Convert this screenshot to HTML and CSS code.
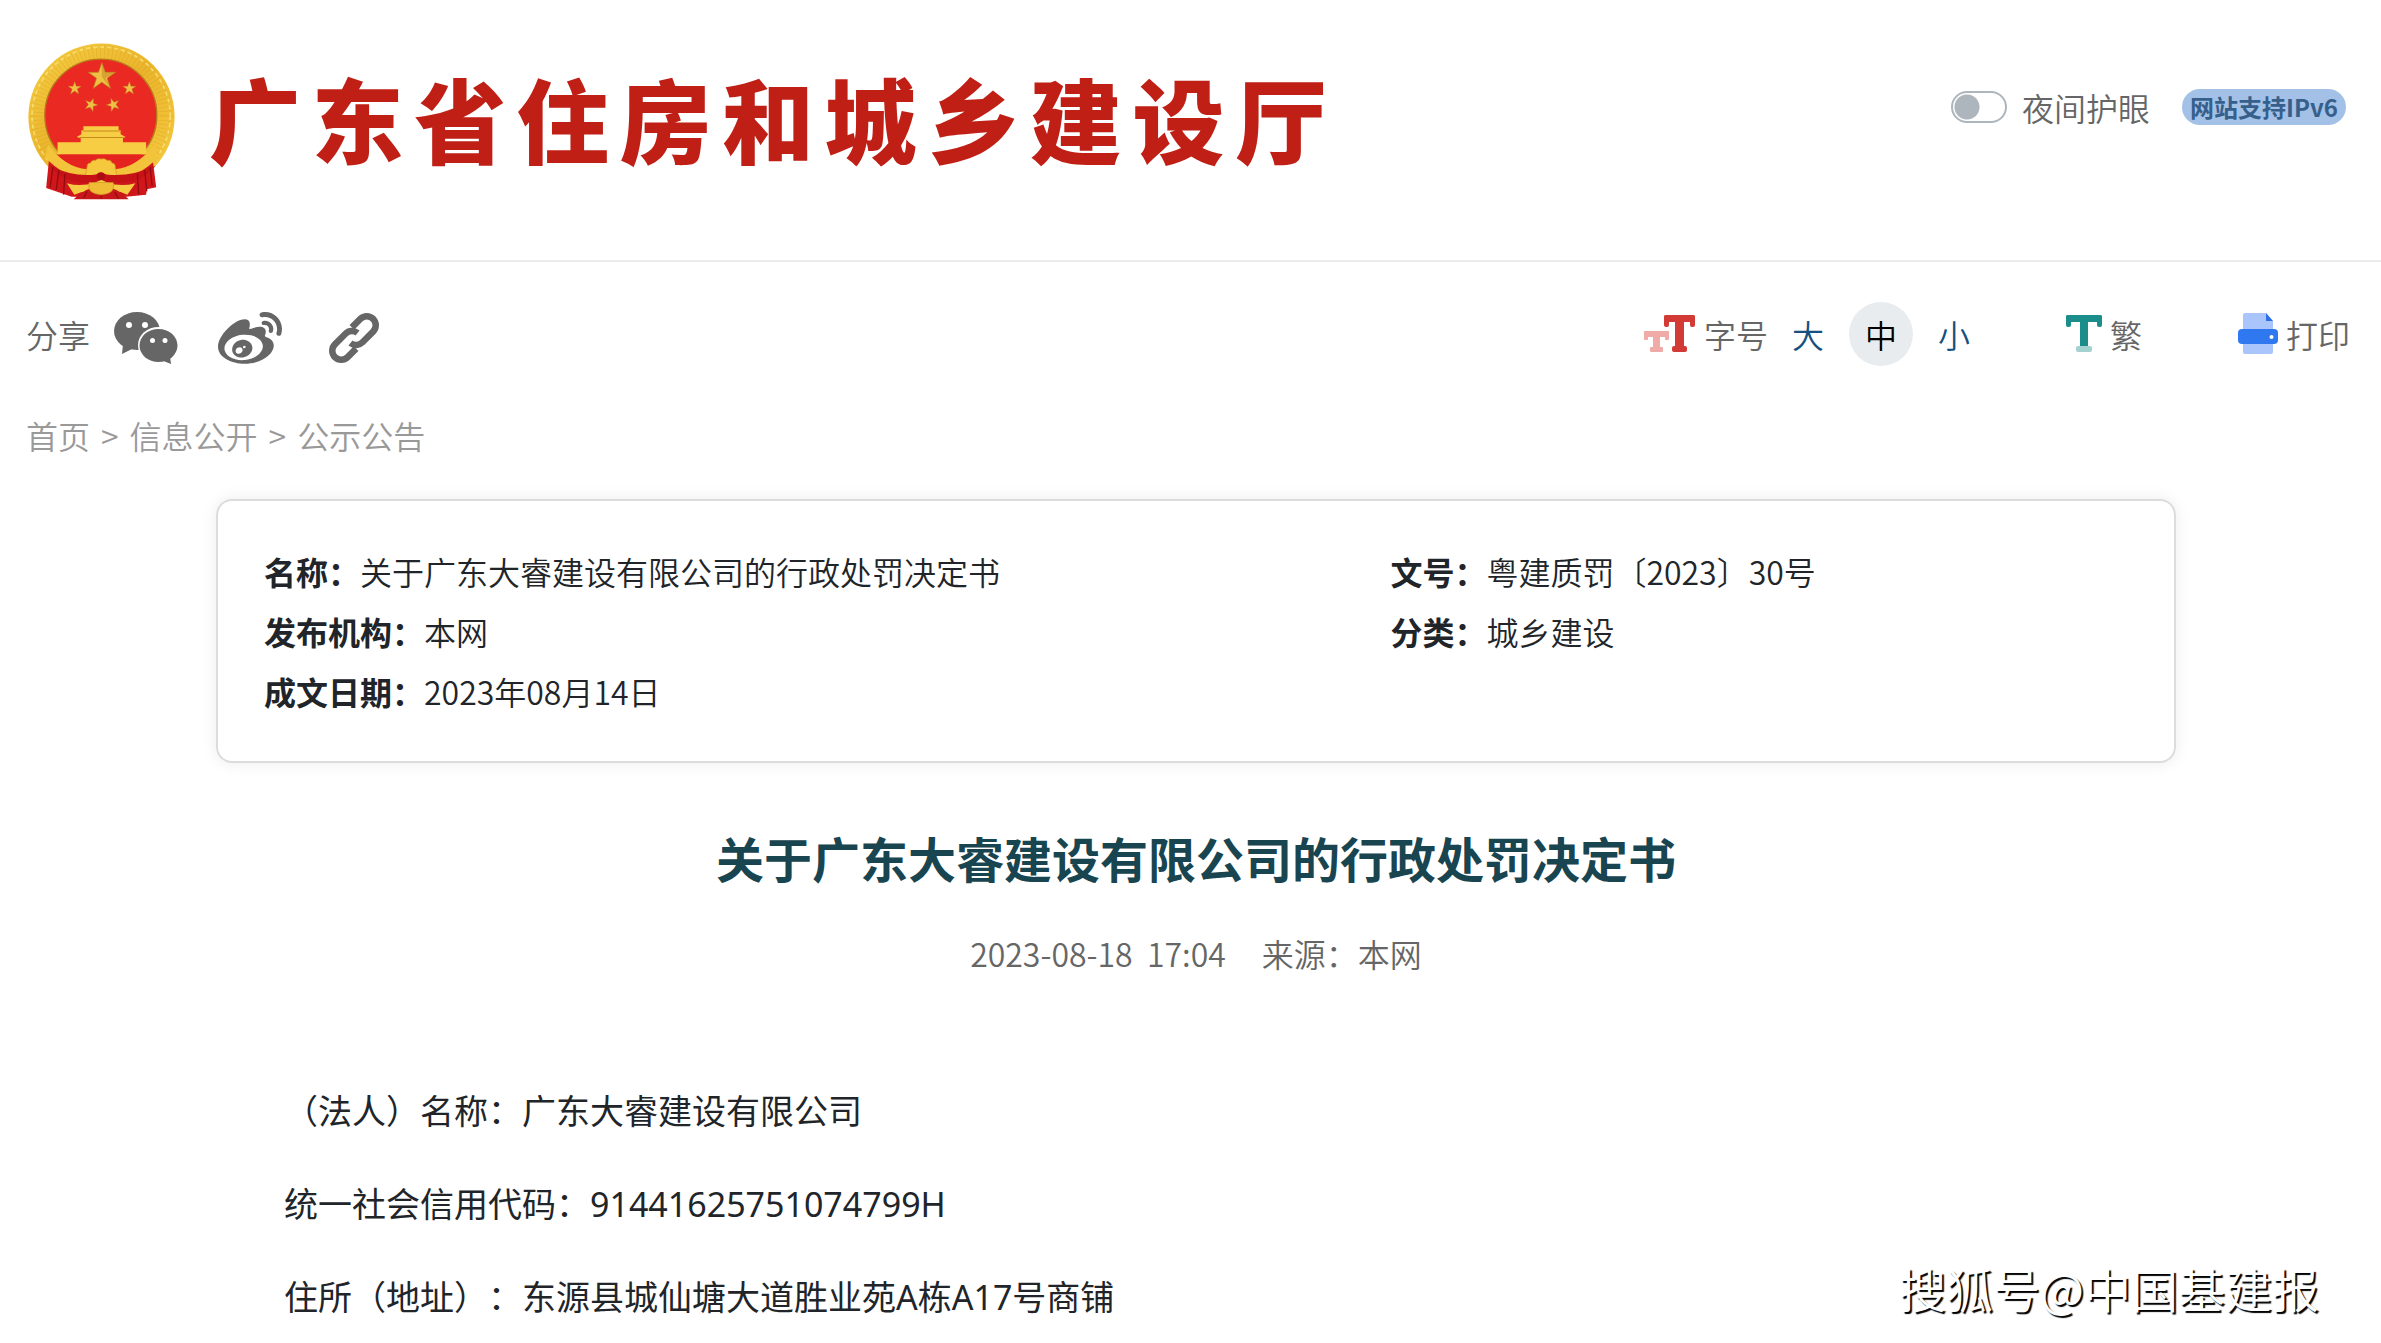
FILE: index.html
```html
<!DOCTYPE html>
<html lang="zh-CN">
<head>
<meta charset="utf-8">
<title>关于广东大睿建设有限公司的行政处罚决定书</title>
<link rel="stylesheet" href="styles.css">
</head>
<body>
<header class="site-header">
  <svg class="emblem" viewBox="86 70 438 468" aria-hidden="true">
    <defs>
      <linearGradient id="gold" x1="0" y1="0" x2="1" y2="1">
        <stop offset="0" stop-color="#f6cf45"/><stop offset=".5" stop-color="#eab52c"/><stop offset="1" stop-color="#f5ca40"/>
      </linearGradient>
      <path id="star" d="M0-42 10-13 41-13 16 5 26 36 0 17-26 36-16 5-41-13-10-13Z"/>
    </defs>
    <path d="M150 443A218 218 0 1 1 460 443Z" fill="url(#gold)"/>
    <circle cx="304" cy="288" r="192" fill="none" stroke="#d69a1e" stroke-width="40" stroke-dasharray="3 9" opacity=".3"/>
    <circle cx="304" cy="288" r="206" fill="none" stroke="#fbe27a" stroke-width="5" stroke-dasharray="12 9" opacity=".8"/>
    <circle cx="303" cy="285" r="167" fill="#ea2a22" stroke="#b67a1b" stroke-width="4"/>
    <g fill="#efc043" stroke="#b5741d" stroke-width="2">
      <use href="#star" x="306" y="170"/>
      <use href="#star" transform="translate(225 205) scale(.48)"/>
      <use href="#star" transform="translate(388 205) scale(.48)"/>
      <use href="#star" transform="translate(274 254) scale(.48) rotate(20)"/>
      <use href="#star" transform="translate(340 254) scale(.48) rotate(-20)"/>
    </g>
    <path d="M306 128v42l26 36-15-32 31-17-31 1Z" fill="#c98c28" opacity=".6"/>
    <path d="M251 318h105v12h6v12l15 8-8 4v12h69v36H174v-36h69v-12l-12-4 14-8v-12h6Z" fill="#f7cd43"/>
    <path d="M240 352h132M249 332h110" stroke="#c98a20" stroke-width="3" fill="none"/>
    <path d="M150 402q24 36 70 34l84 30 84-30q46 2 68-32l12 96-28 6-2 16-60 6H216l-30-10-46-16Z" fill="#cf171b"/>
    <path d="M162 402h276l-56 44H222Z" fill="#e6241f"/>
    <path d="M146 372q50 70 116 74v30q-70-6-126-66ZM464 372q-54 70-120 74v30q76-6 130-66Z" fill="#f2c33b"/>
    <path d="M262 440q0-12 10-12 4-10 14-8 8-8 18-4 10-4 18 4 12-2 14 8 10 0 10 12l6 30H256Z" fill="#f5c83e" stroke="#d59a21" stroke-width="2"/>
    <path d="M150 436q70 34 138 26l16-6 16 6q72 8 146-26-44 58-144 52l-18-6-18 6q-90 6-136-52Z" fill="#c51217"/>
    <path d="M202 488q40 12 84-2l18-8 18 8q40 14 84 2l-24 34q-40-20-78 0-40-18-80 0Z" fill="#f6ca43"/>
    <path d="M222 536q40-42 82-34 44-8 82 34Z" fill="#c8171a"/>
    <path d="M268 486h72q8 34-36 36-44-2-36-36Z" fill="#f1bc35" stroke="#cf941f" stroke-width="2"/>
    <circle cx="303" cy="467" r="12" fill="#ad0d12"/>
    <path d="M160 440l-8 60M178 450l-8 58M196 460l-4 62M450 440l6 56M434 450l6 62M412 460l4 62M262 512l-10 20M304 526v8M344 514l12 20" stroke="#950b10" stroke-width="4" fill="none"/>
  </svg>
  <h1 class="site-name">广东省住房和城乡建设厅</h1>
  <div class="header-tools">
    <label class="night"><input class="night-switch" type="checkbox">夜间护眼</label>
    <span class="ipv6">网站支持IPv6</span>
  </div>
</header>

<div class="toolbar">
  <div class="share">
    <span>分享</span>
    <button class="icon-button" type="button" aria-label="微信">
      <svg width="64" height="52" viewBox="0 0 64 52">
        <g fill="#666"><ellipse cx="23" cy="19" rx="23" ry="19"/><path d="M9 32 8 42 20 36Z"/></g>
        <ellipse cx="44.500" cy="33" rx="20.500" ry="18" fill="#fff"/>
        <g fill="#666"><ellipse cx="44.500" cy="33.500" rx="19" ry="16.500"/><path d="M47 48 57 52 56 44Z"/></g>
        <g fill="#fff"><circle cx="15" cy="13" r="3"/><circle cx="31" cy="13" r="3"/><circle cx="38.500" cy="28.500" r="2.500"/><circle cx="51" cy="28.500" r="2.500"/></g>
      </svg>
    </button>
    <button class="icon-button" type="button" aria-label="微博">
      <svg width="64" height="52" viewBox="0 32 512 416" fill="#666"><path d="M407 177.600c7.600-24-13.400-46.800-37.400-41.700-22 4.800-28.800-28.100-7.100-32.800 50.100-10.900 92.300 37.100 76.500 84.800-6.800 21.200-38.800 10.800-32-10.300zM214.800 446.700C108.500 446.700 0 395.300 0 310.400c0-44.300 28-95.400 76.300-143.700C176 67 279.500 65.800 249.900 161c-4 13.100 12.300 5.700 12.300 6 79.500-33.600 140.500-16.800 114 51.400-3.700 9.400 1.100 10.900 8.300 13.100 135.700 42.300 34.800 215.200-169.700 215.200zm143.700-146.300c-5.400-55.700-78.500-94-163.400-85.700-84.800 8.600-148.800 60.300-143.400 116s78.500 94 163.400 85.700c84.800-8.600 148.800-60.300 143.400-116zM347.900 35.100c-25.900 5.600-16.800 43.700 8.300 38.300 72.300-15.200 134.800 52.800 111.700 124-7.400 24.200 29.100 37 37.400 12 31.900-99.800-55.100-195.900-157.400-174.300zm-78.500 311c-17.100 38.800-66.800 60-109.100 46.300-40.800-13.100-58-53.400-40.300-89.700 17.700-35.400 63.100-55.400 103.400-45.100 42 10.800 63.100 50.200 46 88.500zm-86.300-30c-12.900-5.400-30 .3-38 12.900-8.300 12.900-4.300 28 8.600 34 13.100 6 30.800.3 39.100-12.900 8-13.100 3.700-28.300-9.700-34zm32.600-13.400c-5.100-1.700-11.400.6-14.300 5.400-2.900 5.100-1.400 10.600 3.700 12.900 5.100 2 11.700-.3 14.600-5.400 2.800-5.200 1.100-10.900-4-12.900z"/></svg>
    </button>
    <button class="icon-button" type="button" aria-label="复制链接">
      <svg width="64" height="52" viewBox="-7 -1 64 52"><g transform="rotate(-45 25 25)" fill="none" stroke="#666" stroke-width="6.500"><path d="M31 16H43a9 9 0 0 1 0 18H28a9 9 0 0 1-9-8"/><path d="M19 34H7a9 9 0 0 1 0-18H22a9 9 0 0 1 9 8"/></g></svg>
    </button>
  </div>
  <div class="page-tools">
    <div class="tool">
      <svg width="52" height="38" viewBox="0 0 52 38" aria-hidden="true">
        <g fill="#f0aaa8"><rect y="16" width="25" height="6" rx="1"/><rect y="16" width="4" height="9" rx="1"/><rect x="21" y="16" width="4" height="9" rx="1"/><rect x="9" y="18" width="7" height="17"/><rect x="6" y="32" width="13" height="5" rx="1"/></g>
        <g fill="#d23a35"><rect x="20" width="31" height="7" rx="2"/><rect x="20" width="5" height="12" rx="2"/><rect x="46" width="5" height="12" rx="2"/><rect x="31" y="4" width="9" height="30"/><rect x="28" y="31" width="15" height="6" rx="2"/></g>
      </svg>
      <span>字号</span>
      <div class="sizes">
        <button class="size" type="button">大</button>
        <button class="size size-current" type="button">中</button>
        <button class="size" type="button">小</button>
      </div>
    </div>
    <button class="tool" type="button">
      <svg width="36" height="38" viewBox="0 0 36 38" aria-hidden="true"><g fill="#1b8e8b"><rect width="36" height="7" rx="2"/><rect width="5" height="12" rx="2"/><rect x="31" width="5" height="12" rx="2"/><rect x="14" y="4" width="8" height="27"/></g><rect x="10" y="31" width="16" height="6" rx="2" fill="#a4d2d0"/></svg>
      繁
    </button>
    <button class="tool print" type="button">
      <svg width="40" height="42" viewBox="0 0 40 42" aria-hidden="true"><path d="M5 2q0-2 2-2h21l7 8v11H5Z" fill="#a9c5fb"/><path d="m28 0 7 8h-7Z" fill="#2e6fe8"/><rect y="16" width="40" height="15" rx="4" fill="#2f78f0"/><path d="M5 31h30v8q0 2-2 2H7q-2 0-2-2Z" fill="#a9c5fb"/><circle cx="33.500" cy="24" r="2" fill="#fff"/></svg>
      打印
    </button>
  </div>
</div>

<nav class="crumbs" aria-label="面包屑">
  <a href="#home">首页</a><span>&gt;</span><a href="#info">信息公开</a><span>&gt;</span><a href="#notice">公示公告</a>
</nav>

<main class="article">
  <dl class="summary">
    <div class="item"><dt>名称：</dt><dd>关于广东大睿建设有限公司的行政处罚决定书</dd></div>
    <div class="item"><dt>文号：</dt><dd>粤建质罚〔2023〕30号</dd></div>
    <div class="item"><dt>发布机构：</dt><dd>本网</dd></div>
    <div class="item"><dt>分类：</dt><dd>城乡建设</dd></div>
    <div class="item"><dt>成文日期：</dt><dd>2023年08月14日</dd></div>
  </dl>
  <h2 class="title">关于广东大睿建设有限公司的行政处罚决定书</h2>
  <div class="meta"><time>2023-08-18&nbsp; 17:04</time><span>来源：本网</span></div>
  <div class="content">
    <p>（法人）名称：广东大睿建设有限公司</p>
    <p>统一社会信用代码：91441625751074799H</p>
    <p>住所（地址）：东源县城仙塘大道胜业苑A栋A17号商铺</p>
  </div>
</main>
<div class="watermark">搜狐号@中国基建报</div>
</body>
</html>
```

FILE: styles.css
```css
* {
  box-sizing: border-box;
}

body {
  position: relative;
  margin: 0;
  background: #fff;
  color: #212529;
  font-family: "Noto Sans CJK SC", sans-serif;
  font-size: 32px;
  font-weight: 350;
  line-height: 48px;
  text-spacing-trim: space-all;
}

button {
  padding: 0;
  border: 0;
  background: none;
  color: inherit;
  font: inherit;
  cursor: pointer;
}

svg {
  display: block;
  flex: none;
}

.site-header {
  display: flex;
  align-items: flex-start;
  height: 262px;
  padding: 43px 35px 0 28px;
  border-bottom: 2px solid #ebebeb;
}

.emblem {
  width: 147px;
  height: 157px;
}

.site-name {
  width: 1118px;
  margin: 14px 0 0 34px;
  color: #c01f16;
  font-size: 92px;
  font-weight: 900;
  line-height: 120px;
  text-align-last: justify;
}

.header-tools {
  display: flex;
  align-items: center;
  gap: 32px;
  margin: 40px 0 0 auto;
  color: #666;
}

.night {
  display: flex;
  align-items: center;
  gap: 15px;
}

.night-switch {
  width: 56px;
  height: 32px;
  margin: 0;
  border: 2px solid #adb5bd;
  border-radius: 16px;
  appearance: none;
  background: radial-gradient(circle at 14px 14px, #adb5bd 12px, transparent 13px);
}

.ipv6 {
  padding: 0 8px;
  border-radius: 18px;
  background: #a3c1e6;
  color: #365f8c;
  font-size: 24px;
  font-weight: 700;
  line-height: 36px;
}

.toolbar {
  display: flex;
  align-items: center;
  justify-content: space-between;
  padding: 40px 31px 0 26px;
  color: #666;
}

.share {
  display: flex;
  align-items: center;
  gap: 40px;
}

.share span {
  margin-right: -16px;
}

.icon-button {
  margin-top: 8px;
}

.page-tools {
  display: flex;
  align-items: center;
}

.tool {
  display: flex;
  align-items: center;
  gap: 8px;
  margin-right: 80px;
}

.print {
  margin: 0 0 0 16px;
}

.sizes {
  display: flex;
  gap: 9px;
}

.size {
  width: 64px;
  height: 64px;
  border-radius: 32px;
  color: #16507f;
}

.size-current {
  background: #e9ecef;
  color: #000;
}

.crumbs {
  display: flex;
  gap: 11px;
  padding: 45px 26px 40px;
  color: #999;
}

.crumbs a {
  color: inherit;
  text-decoration: none;
}

.article {
  padding: 0 205px 0 216px;
}

.summary {
  display: grid;
  grid-template-columns: 3fr 2fr;
  column-gap: 20px;
  margin: 0;
  padding: 40px 46px;
  border: 2px solid #dcdcdc;
  border-radius: 16px;
  box-shadow: 0 0 16px rgba(0, 0, 0, 0.08);
  line-height: 60px;
}

.item {
  display: flex;
}

.item dt {
  font-weight: 700;
}

.item dd {
  margin: 0;
}

.title {
  margin: 58px 0 0;
  color: #18454f;
  font-size: 48px;
  font-weight: 700;
  line-height: 72px;
  text-align: center;
}

.meta {
  display: flex;
  justify-content: center;
  gap: 36px;
  margin-top: 36px;
  color: #666;
}

.content {
  padding-top: 88px;
  font-family: "Noto Sans", "Noto Sans CJK SC", sans-serif;
  font-size: 34px;
  font-weight: 400;
  line-height: 93px;
}

.content p {
  margin: 0;
  text-indent: 68px;
}

.watermark {
  position: absolute;
  right: 62px;
  bottom: 26px;
  color: #fff;
  font-size: 47px;
  line-height: 60px;
  text-shadow: 2px 2px 1px #000;
}
```
